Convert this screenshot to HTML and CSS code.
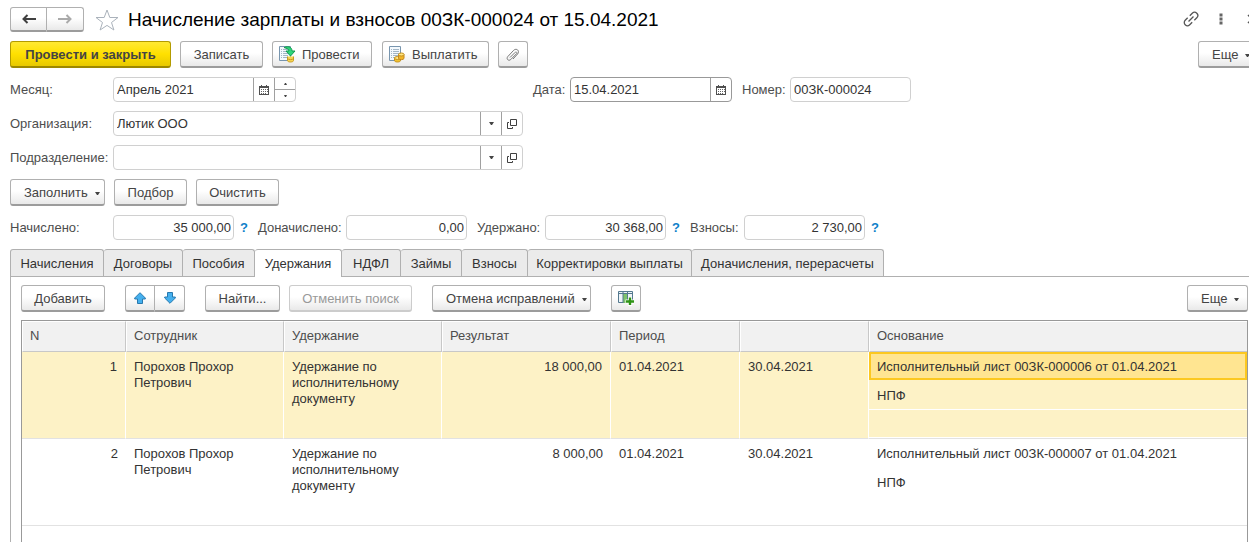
FILE: index.html
```html
<!DOCTYPE html>
<html lang="ru">
<head>
<meta charset="utf-8">
<title>Начисление зарплаты и взносов</title>
<link rel="stylesheet" href="styles.css">
</head>
<body>
<svg class="defs" aria-hidden="true">
  <symbol id="calendar" viewBox="0 0 10 10"><path d="M0 1h2V0h1v1h4V0h1v1h2v9H0zM1 3v6h8V3z" fill="#505050" fill-rule="evenodd"/><path d="M2 4h1v1H2zM4 4h1v1H4zM6 4h1v1H6zM2 6h1v1H2zM4 6h1v1H4zM6 6h1v1H6zM8 4h1v1H8zM8 6h1v1H8zM2 8h1v1H2zM4 8h1v1H4zM6 8h1v1H6z" fill="#666"/></symbol>
  <symbol id="open" viewBox="0 0 10 10"><path d="M3.500.5h6v6h-6zM2 3.500H.5v6h5V8" fill="none" stroke="#404040"/></symbol>
  <symbol id="caret" viewBox="0 0 5 3"><path d="M0 0h5L3 3H2z" fill="#444"/></symbol>
  <symbol id="sheet" viewBox="0 0 16 16"><path d="M.5.5h11v14H.5z" fill="#f4f9fd" stroke="#7895ae"/><path d="M2 3.500h1m1 0h6M2 5.500h1m1 0h6M2 7.500h1m1 0h6M2 9.500h1m1 0h5M2 11.500h1m1 0h4" stroke="#a3b6c6"/></symbol>
</svg>
<main class="app">
  <header class="title-bar">
    <div class="pair">
      <button class="btn nav" aria-label="Назад"><svg width="14" height="10" viewBox="0 0 14 10"><path d="M1 5h13M5.500 1L1.500 5l4 4" fill="none" stroke="#404040" stroke-width="2"/></svg></button>
      <button class="btn nav" aria-label="Вперед"><svg width="14" height="10" viewBox="0 0 14 10"><path d="M0 5h13M8.500 1l4 4-4 4" fill="none" stroke="#aaa" stroke-width="2"/></svg></button>
    </div>
    <button class="plain star" aria-label="Избранное"><svg width="24" height="22" viewBox="0 0 24 22"><path d="M12 1l2.800 7.500H23l-6.500 5 2.400 7.500-6.900-4.600L5.100 21l2.400-7.500L1 8.500h8.200z" fill="#fff" stroke="#aab2bb"/></svg></button>
    <h1>Начисление зарплаты и взносов 00ЗК-000024 от 15.04.2021</h1>
    <div class="window-tools">
      <button class="plain" aria-label="Ссылка"><svg width="16" height="16" viewBox="0 0 16 16"><g transform="rotate(-45 8 8)" fill="none" stroke="#555" stroke-width="1.300"><path d="M6.500 4.800H3a3.200 3.200 0 0 0 0 6.400h3.500M9.500 4.800H13a3.200 3.200 0 0 1 0 6.400H9.500M4.500 8h7"/></g></svg></button>
      <button class="plain" aria-label="Меню"><svg width="4" height="12" viewBox="0 0 4 12"><path d="M.5.500h3v3h-3zM.5 4.500h3v3h-3zM.5 8.500h3v3h-3z" fill="#666"/></svg></button>
      <button class="plain close" aria-label="Закрыть"><svg width="10" height="10" viewBox="0 0 10 10"><path d="M1 1l8 8M9 1L1 9" stroke="#555" stroke-width="1.500"/></svg></button>
    </div>
  </header>

  <div class="commands">
    <button class="btn primary">Провести и закрыть</button>
    <button class="btn save">Записать</button>
    <button class="btn post"><svg width="17" height="17" viewBox="0 0 17 17"><use href="#sheet" width="16" height="16"/><path d="M8.500 10.500v4c0 2 6 2 6 0v-4" fill="#f7d552" stroke="#c69a22"/><path d="M8.500 12.500c1 1.500 5 1.500 6 0" fill="none" stroke="#c69a22"/><path d="M5 1.500c5-2 8 0 8 3.500h3l-4.500 5L7 5h3c0-2-2-2.500-5-3.500z" fill="#2ed67a" stroke="#129a50"/></svg>Провести</button>
    <button class="btn pay"><svg width="17" height="17" viewBox="0 0 17 17"><use href="#sheet" width="16" height="16"/><path d="M5.500 12v2.500c0 2 6 2 6 0V12z" fill="#f1c232" stroke="#c4901c"/><ellipse cx="8.500" cy="12" rx="3" ry="1.500" fill="#ffe682" stroke="#c4901c"/><path d="M9.500 8.500v4c1 1.500 5 1.500 5.500 0v-4z" fill="#f1b62b" stroke="#c4861c"/><ellipse cx="12.300" cy="8.500" rx="2.800" ry="1.500" fill="#ffe682" stroke="#c4901c"/></svg>Выплатить</button>
    <button class="btn clip" aria-label="Вложения"><svg width="14" height="14" viewBox="0 0 14 14"><path d="M4 9.500l5-5c1-1.300 2.600 0 1.400 1.300l-5.600 5.700C2.500 13.500 0 11 1.700 8.700L7.600 2.400c2.800-2.800 6.600.4 4 3.600L7 11" fill="none" stroke="#777"/></svg></button>
    <button class="btn menu more">Еще<svg class="caret"><use href="#caret"/></svg></button>
  </div>

  <form class="form">
    <div class="row">
      <label for="month" class="lead">Месяц:</label>
      <div class="field month"><input id="month" value="Апрель 2021"><button type="button" aria-label="Календарь"><svg width="10" height="10"><use href="#calendar"/></svg></button><span class="spin"><button type="button" aria-label="Больше"><svg width="3" height="2" viewBox="0 0 3 2"><path d="M1 0h1l1 2H0z" fill="#444"/></svg></button><button type="button" aria-label="Меньше"><svg width="3" height="2" viewBox="0 0 3 2"><path d="M0 0h3L2 2H1z" fill="#444"/></svg></button></span></div>
      <label for="date" class="date-label">Дата:</label>
      <div class="field date"><input id="date" value="15.04.2021"><button type="button" aria-label="Календарь"><svg width="10" height="10"><use href="#calendar"/></svg></button></div>
      <label for="number" class="number-label">Номер:</label>
      <div class="field amount"><input id="number" value="00ЗК-000024"></div>
    </div>
    <div class="row">
      <label for="org" class="lead">Организация:</label>
      <div class="field wide"><input id="org" value="Лютик ООО"><button type="button" aria-label="Выбрать"><svg class="caret"><use href="#caret"/></svg></button><button type="button" aria-label="Открыть"><svg width="10" height="10"><use href="#open"/></svg></button></div>
    </div>
    <div class="row">
      <label for="dept" class="lead">Подразделение:</label>
      <div class="field wide"><input id="dept"><button type="button" aria-label="Выбрать"><svg class="caret"><use href="#caret"/></svg></button><button type="button" aria-label="Открыть"><svg width="10" height="10"><use href="#open"/></svg></button></div>
    </div>
    <div class="fill-row">
      <button type="button" class="btn menu fill">Заполнить<svg class="caret"><use href="#caret"/></svg></button>
      <button type="button" class="btn pick">Подбор</button>
      <button type="button" class="btn clear">Очистить</button>
    </div>
    <div class="row totals">
      <label for="t1" class="lead">Начислено:</label>
      <div class="field amount"><input id="t1" value="35 000,00"></div><a href="#" class="help">?</a>
      <label for="t2" class="t2">Доначислено:</label>
      <div class="field amount"><input id="t2" value="0,00"></div>
      <label for="t3" class="t3">Удержано:</label>
      <div class="field amount"><input id="t3" value="30 368,00"></div><a href="#" class="help">?</a>
      <label for="t4" class="t4">Взносы:</label>
      <div class="field amount"><input id="t4" value="2 730,00"></div><a href="#" class="help">?</a>
    </div>
  </form>

  <nav class="tabs" role="tablist">
    <button role="tab">Начисления</button><button role="tab">Договоры</button><button role="tab">Пособия</button><button role="tab" aria-selected="true" class="active">Удержания</button><button role="tab">НДФЛ</button><button role="tab">Займы</button><button role="tab">Взносы</button><button role="tab">Корректировки выплаты</button><button role="tab">Доначисления, перерасчеты</button>
  </nav>
  <section class="panel">
    <div class="toolbar">
      <button class="btn add">Добавить</button>
      <div class="pair arrows">
        <button class="btn" aria-label="Вверх"><svg width="12" height="12" viewBox="0 0 12 12"><path d="M6 .7L11.300 6v1H8.500v4.500h-5V7H.7V6z" fill="#45b0ee" stroke="#2879ae"/></svg></button>
        <button class="btn" aria-label="Вниз"><svg width="12" height="12" viewBox="0 0 12 12"><path d="M6 11.300L.7 6V5h2.800V.5h5V5h2.800v1z" fill="#45b0ee" stroke="#2879ae"/></svg></button>
      </div>
      <button class="btn find">Найти...</button>
      <button class="btn cancel" disabled>Отменить поиск</button>
      <button class="btn menu undo">Отмена исправлений<svg class="caret"><use href="#caret"/></svg></button>
      <button class="btn columns" aria-label="Настройка колонок"><svg width="16" height="15" viewBox="0 0 16 15"><path d="M.5.500h14v11H.5z" fill="#eef4f8" stroke="#54798f"/><path d="M5 2h4v10H5z" fill="#7dc36c"/><path d="M.5 2.500h14M5 1v11M9.500 1v11" stroke="#54798f"/><path d="M12 6v9M7.500 10.500H16" stroke="#fff" stroke-width="4"/><path d="M12 6.500V14M8 10.500h8" stroke="#2f9416" stroke-width="2.400"/></svg></button>
      <button class="btn menu more">Еще<svg class="caret"><use href="#caret"/></svg></button>
    </div>
    <div class="grid">
      <table>
        <colgroup><col class="c1"><col class="c2"><col class="c2"><col class="c4"><col class="c5"><col class="c5"><col></colgroup>
        <thead><tr><th>N</th><th>Сотрудник</th><th>Удержание</th><th>Результат</th><th>Период</th><th></th><th>Основание</th></tr></thead>
        <tbody>
          <tr class="selected"><td class="num">1</td><td>Порохов Прохор Петрович</td><td>Удержание по исполнительному документу</td><td class="num">18 000,00</td><td>01.04.2021</td><td>30.04.2021</td><td class="stack"><div class="current">Исполнительный лист 00ЗК-000006 от 01.04.2021</div><div>НПФ</div><div></div></td></tr>
          <tr><td class="num">2</td><td>Порохов Прохор Петрович</td><td>Удержание по исполнительному документу</td><td class="num">8 000,00</td><td>01.04.2021</td><td>30.04.2021</td><td class="stack"><div>Исполнительный лист 00ЗК-000007 от 01.04.2021</div><div>НПФ</div><div></div></td></tr>
        </tbody>
      </table>
    </div>
  </section>
</main>
</body>
</html>
```
FILE: styles.css
```css
* { box-sizing: border-box; }
body {
  margin: 0;
  overflow: hidden;
  background: #fff;
  color: #333;
  font: 13px/16px "Liberation Sans", Arial, sans-serif;
}
button, input { font: inherit; color: inherit; }
svg { display: block; flex: none; }
.defs { position: absolute; width: 0; height: 0; }

/* The form is slightly wider than the window and runs past its right edge. */
.app {
  display: flex;
  flex-direction: column;
  min-height: 100vh;
  margin-right: -10px;
  padding: 7px 0 0 10px;
}
.btn {
  display: flex;
  align-items: center;
  justify-content: center;
  height: 27px;
  padding: 1px 4px 0;
  border: 1px solid #b0b0b0;
  border-bottom: 2px solid #9c9c9c;
  border-radius: 3px;
  background: linear-gradient(#fff 45%, #e9e9e9);
  color: #444;
  white-space: nowrap;
}
.btn:disabled { color: #999; border-color: #ccc; }
.caret { width: 5px; height: 3px; }
.menu { justify-content: flex-start; padding-left: 13px; }
.btn .caret { margin: 1px 0 0 7px; }
.plain { display: flex; padding: 0; border: 0; background: none; }
.pair { display: flex; }
.pair .btn { padding-top: 0; }
.pair .btn:first-child { border-radius: 3px 0 0 3px; }
.pair .btn:last-child { border-left: 0; border-radius: 0 3px 3px 0; }

.title-bar { display: flex; align-items: center; height: 25px; }
.nav { width: 37px; height: 25px; }
.star { margin-left: 11px; }
h1 { margin: 0 0 0 9px; font-size: 19px; line-height: 24px; font-weight: 400; color: #000; white-space: nowrap; }
.window-tools { display: flex; align-items: center; gap: 20px; margin-left: auto; margin-right: 2px; padding-bottom: 2px; }
.close { margin-left: 4px; }

.commands { display: flex; gap: 9px; margin-top: 9px; }
.primary {
  width: 161px;
  border-color: #b39b00;
  border-bottom-color: #9d8800;
  background: linear-gradient(#ffe934, #ffe000 50%, #e8c900);
  font-weight: 700;
}
.save { width: 83px; }
.post, .pay { justify-content: flex-start; padding-left: 6px; gap: 6px; }
.post { width: 100px; }
.pay { width: 107px; margin-left: 1px; }
.clip { width: 30px; }
.more { width: 61px; margin-left: auto; }

.form { display: flex; flex-direction: column; margin-top: 9px; color: #4d4d4d; }
.row { display: flex; align-items: center; height: 25px; margin-bottom: 9px; }
.lead { width: 103px; white-space: nowrap; }
.field {
  display: flex;
  height: 25px;
  border: 1px solid #d0d0d0;
  border-radius: 4px;
  background: #fff;
  color: #333;
}
.field input { flex: 1; width: 0; min-width: 0; padding: 0 3px; border: 0; background: none; outline: 0; }
.field button {
  display: flex;
  align-items: center;
  justify-content: center;
  width: 21px;
  padding: 0;
  border: 0;
  border-left: 1px solid #a0a0a0;
  background: none;
}
.month { width: 183px; }
.spin { display: flex; flex-direction: column; border-left: 1px solid #a0a0a0; }
.spin button { flex: 1; width: 20px; border-left: 0; }
.spin button + button { border-top: 1px solid #a0a0a0; }
.date { width: 162px; border-color: #999; }
.date-label { width: 37px; margin-left: 237px; }
.number-label { width: 48px; margin-left: 10px; }
.wide { width: 410px; }
.amount { width: 121px; }
.fill-row { display: flex; gap: 9px; margin-bottom: 9px; }
.fill { width: 95px; }
.pick { width: 73px; }
.clear { width: 83px; }
.totals { margin-bottom: 9px; }
.totals input { padding: 0 2px; text-align: right; }
.help { width: 8px; margin-left: 6px; color: #0f7fc9; font-weight: 700; text-decoration: none; }
.t2 { width: 88px; margin-left: 10px; }
.t3 { width: 68px; margin-left: 10px; }
.t4 { width: 54px; margin-left: 10px; }

.tabs {
  display: grid;
  grid-template-columns: 94px 79px 72px 87px 59px 61px 66px 164px 192px;
  height: 27px;
}
.tabs button {
  padding: 0;
  border: 1px solid #b0b0b0;
  border-left-width: 0;
  border-bottom: 0;
  border-radius: 3px 3px 0 0;
  background: #ebebeb;
  white-space: nowrap;
}
.tabs button:first-child { border-left-width: 1px; }
.tabs .active { height: 28px; background: #fff; z-index: 1; }
.panel {
  display: flex;
  flex: 1;
  flex-direction: column;
  padding: 8px 10px 0;
  border: 1px solid #b0b0b0;
  border-bottom: 0;
}
.toolbar { display: flex; margin-bottom: 8px; }
.add { width: 84px; }
.arrows { margin-left: 20px; }
.arrows .btn { width: 30px; }
.find { width: 75px; margin-left: 20px; }
.cancel { width: 123px; margin-left: 9px; }
.undo { width: 159px; margin-left: 20px; }
.columns { width: 30px; margin-left: 20px; }

.grid { flex: 1; border: 1px solid #999; border-bottom: 0; }
table { width: 100%; border-collapse: separate; border-spacing: 0; table-layout: fixed; }
.c1 { width: 104px; }
.c2 { width: 158px; }
.c4 { width: 169px; }
.c5 { width: 129px; }
th {
  height: 31px;
  padding: 0 7px 2px;
  border: 1px solid #fff;
  border-right-color: #c8c8c8;
  border-bottom-color: #c8c8c8;
  background: #f1f1f1;
  font-weight: 400;
  text-align: left;
  color: #4d4d4d;
}
th:last-child { border-right: 0; }
td { height: 87px; padding: 7px 8px 0; border-bottom: 1px solid #e2e2e2; vertical-align: top; }
.num { text-align: right; }
.selected td { background: #fdf2c6; border-right: 1px solid #fff; }
.selected td:last-child { border-right: 0; }
.stack, .selected .stack { padding: 0; }
.stack div { height: 29px; padding: 7px 8px 0; }
.stack div:last-child { height: 28px; }
.selected .stack div { border-bottom: 1px solid #fff; }
.selected .stack .current { height: 28px; margin-bottom: 1px; padding: 5px 6px 0; border: 2px solid #fcc820; background: #ffe591; }
```
